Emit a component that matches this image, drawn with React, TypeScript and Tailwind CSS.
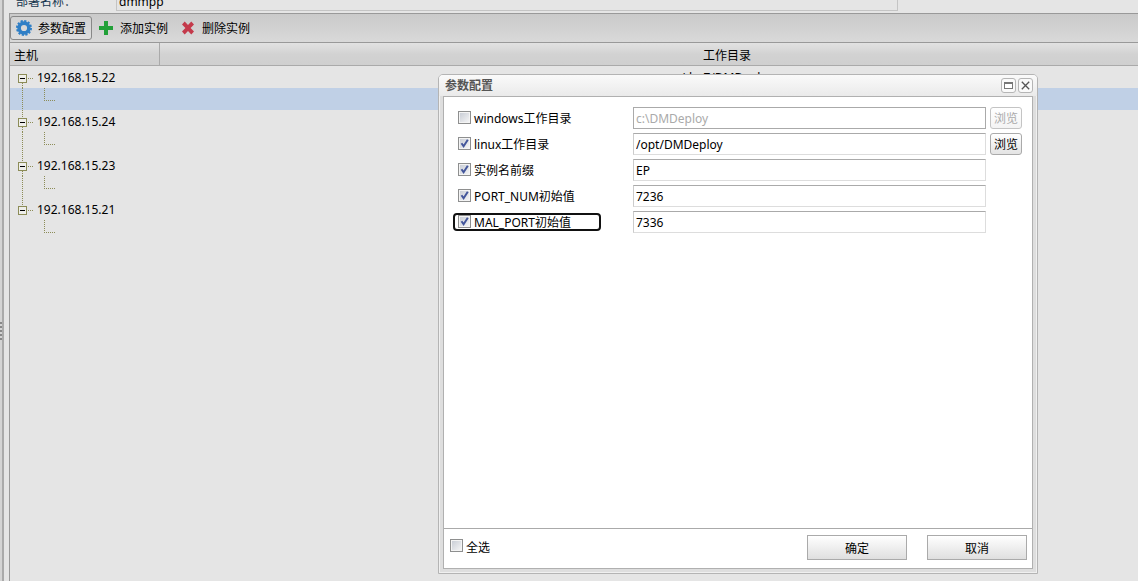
import clsx from 'clsx';
import { useState } from 'react';

interface Field {
	id: string;
	label: string;
	value: string;
	enabled: boolean;
	browse?: boolean;
	highlighted?: boolean;
}

const HOSTS = ['192.168.15.22', '192.168.15.24', '192.168.15.23', '192.168.15.21'];

const FIELDS: Field[] = [
	{ id: 'windows', label: 'windows工作目录', value: 'c:\\DMDeploy', enabled: false, browse: true },
	{ id: 'linux', label: 'linux工作目录', value: '/opt/DMDeploy', enabled: true, browse: true },
	{ id: 'prefix', label: '实例名前缀', value: 'EP', enabled: true },
	{ id: 'port', label: 'PORT_NUM初始值', value: '7236', enabled: true },
	{ id: 'mal', label: 'MAL_PORT初始值', value: '7336', enabled: true, highlighted: true }
];

const GearIcon = () => (
	<svg width="16" height="16" viewBox="0 0 16 16" aria-hidden="true">
		<circle cx="8" cy="8" r="7" fill="none" stroke="#2f7fc6" strokeWidth="2" strokeDasharray="2.2 1.465" />
		<circle cx="8" cy="8" r="4.9" fill="none" stroke="#2f7fc6" strokeWidth="3.6" />
	</svg>
);

const PlusIcon = () => (
	<svg width="16" height="16" viewBox="0 0 16 16" aria-hidden="true">
		<path d="M6 1h4v5h5v4h-5v5H6v-5H1V6h5z" fill="#22a038" />
	</svg>
);

const CrossIcon = () => (
	<svg width="16" height="16" viewBox="0 0 16 16" aria-hidden="true">
		<path
			d="M2 4.5 4.7 1.6 8 4.9l3.3-3.3L14 4.5 10.6 8l3.4 3.5-2.7 2.9L8 11.1l-3.3 3.3L2 11.5 5.4 8z"
			fill="#c43a4b"
		/>
	</svg>
);

const CheckBox = ({ id, checked, onChange }: { id: string; checked: boolean; onChange: (v: boolean) => void }) => (
	<span className="relative block size-[13px] shrink-0 self-start">
		<input
			id={id}
			type="checkbox"
			checked={checked}
			onChange={(event) => onChange(event.target.checked)}
			className="block size-[13px] appearance-none border border-[#8e8f8f] bg-linear-to-br from-[#c5cad3] to-[#f8f8f8] shadow-[inset_0_0_0_1px_#f4f4f4]"
		/>
		{checked && (
			<svg className="pointer-events-none absolute inset-0" width="13" height="13" viewBox="0 0 13 13">
				<path d="M3.5 6.2 5.6 9.2 9.8 2.8" fill="none" stroke="#43569b" strokeWidth="2" />
			</svg>
		)}
	</span>
);

const HostNode = ({ host, last }: { host: string; last: boolean }) => (
	<div className="flex h-[22px] items-center">
		<svg width="27" height="22" viewBox="0 0 27 22" aria-hidden="true" shapeRendering="crispEdges">
			{!last && <path d="M12.5 17v5" stroke="#8c8c57" strokeDasharray="1 1" />}
			{host !== HOSTS[0] && <path d="M12.5 0v8" stroke="#8c8c57" strokeDasharray="1 1" />}
			<path d="M8.5 8.5h8v8h-8z" fill="#eeeeea" stroke="#8c8c57" />
			<path d="M10 12.5h5" stroke="#000" />
			<path d="M18 12.5h6" stroke="#8c8c57" strokeDasharray="1 1" />
		</svg>
		<span className="pt-0.5">{host}</span>
	</div>
);

const InstanceNode = ({ last }: { last: boolean }) => (
	<svg className="block" width="60" height="22" viewBox="0 0 60 22" aria-hidden="true" shapeRendering="crispEdges">
		{!last && <path d="M12.5 0v22" stroke="#8c8c57" strokeDasharray="1 1" />}
		<path d="M34.5 0v12M34 12.5h12" fill="none" stroke="#8c8c57" strokeDasharray="1 1" />
	</svg>
);

const HostTable = () => (
	<table className="w-[1284px] table-fixed border-separate border-spacing-0">
		<colgroup>
			<col className="w-[150px]" />
			<col />
		</colgroup>
		<thead>
			<tr className="h-[23px] bg-linear-to-b from-[#e2e2e2] via-[#d2d2d2] to-[#cfcfcf]">
				<th className="border-r border-b border-[#aaa] px-1 pt-1 pb-0 text-left font-normal">主机</th>
				<th className="border-b border-[#aaa] p-0 pt-1 font-normal">工作目录</th>
			</tr>
		</thead>
		{HOSTS.map((host, index) => {
			const last = index === HOSTS.length - 1;
			return (
				<tbody key={host}>
					<tr>
						<td className="p-0">
							<HostNode host={host} last={last} />
						</td>
						<td className="p-0 pt-0.5 text-center">{index === 0 && '/dm7/DMDeploy'}</td>
					</tr>
					<tr className={clsx(index === 0 && 'bg-[#c0d0e6]')}>
						<td className="p-0">
							<InstanceNode last={last} />
						</td>
						<td className="p-0" />
					</tr>
				</tbody>
			);
		})}
	</table>
);

const ToolButton = ({ icon, title, active }: { icon: React.ReactNode; title: string; active?: boolean }) => (
	<button
		type="button"
		className={clsx(
			'flex h-6 items-center gap-1.5 rounded-[3px] border px-[5px]',
			active ? 'border-[#888] bg-linear-to-b from-[#d2d2d2] to-[#dedede]' : 'border-transparent'
		)}
	>
		{icon}
		<span className="pt-0.5">{title}</span>
	</button>
);

const FieldRow = ({ field }: { field: Field }) => {
	const [enabled, setEnabled] = useState(field.enabled);
	const [value, setValue] = useState(field.value);

	return (
		<div className="flex h-[22px] items-center">
			<div
				className={clsx(
					'flex h-[18px] w-[148px] shrink-0 items-center gap-[3px] rounded-[4px] border-2 pl-[3px]',
					field.highlighted ? 'border-[#111]' : 'border-transparent'
				)}
			>
				<CheckBox id={field.id} checked={enabled} onChange={setEnabled} />
				<label htmlFor={field.id} className="pt-0.5 leading-4">
					{field.label}
				</label>
			</div>
			<input
				type="text"
				aria-label={field.label}
				value={value}
				disabled={!enabled}
				onChange={(event) => setValue(event.target.value)}
				className={clsx(
					'ml-8 h-[22px] min-w-0 flex-1 border bg-white px-[2px] disabled:text-[#aaa]',
					enabled ? 'border-[#ddd] border-t-[#aaa] border-l-[#ccc]' : 'border-[#aaa]'
				)}
			/>
			<div className="ml-1 w-8 shrink-0">
				{field.browse && (
					<button
						type="button"
						disabled={!enabled}
						className="h-[22px] w-full rounded-[3px] border border-[#aaa] bg-linear-to-b from-white to-[#e4e4e4] pt-0.5 disabled:border-[#c4c4c4] disabled:to-[#f4f4f4] disabled:text-[#aaa]"
					>
						浏览
					</button>
				)}
			</div>
		</div>
	);
};

const WINDOW_BUTTON = 'flex size-[15px] items-center justify-center rounded-[3px] border border-[#b5b5b5] bg-[#fafafa]';
const ACTION_BUTTON = 'h-[25px] w-[100px] border border-[#aaa] bg-linear-to-b from-white to-[#dfdfdf] pt-0.5';

const ConfigDialog = () => {
	const [all, setAll] = useState(false);

	return (
		<div
			role="dialog"
			aria-labelledby="dialog-title"
			className="absolute top-[74px] left-[438px] flex h-[500px] w-[600px] flex-col rounded-t-[5px] border border-[#b4b4b4] bg-[#dedede] px-1 pb-1 shadow-[inset_0_0_0_1px_#f0f0f0]"
		>
			<div className="-mx-1 flex h-[21px] shrink-0 items-center rounded-t-[4px] bg-linear-to-b from-[#fafafa] to-[#eaeaea] pr-1 pl-1.5">
				<h2 id="dialog-title" className="flex-1 font-bold text-[#555]">
					参数配置
				</h2>
				<div className="flex gap-0.5">
					<button type="button" aria-label="最大化" className={WINDOW_BUTTON}>
						<svg width="9" height="7" viewBox="0 0 9 7" shapeRendering="crispEdges">
							<path d="M.5.5h8v6h-8zM0 1.5h9" fill="#fff" stroke="#777" />
						</svg>
					</button>
					<button type="button" aria-label="关闭" className={WINDOW_BUTTON}>
						<svg width="9" height="9" viewBox="0 0 9 9">
							<path d="m.8.8 7.4 7.4M8.2.8.8 8.2" stroke="#555" strokeWidth="1.3" />
						</svg>
					</button>
				</div>
			</div>
			<div className="flex flex-1 flex-col border border-[#b0b0b0] bg-white">
				<div className="flex flex-1 flex-col gap-1 pt-2.5 pr-2.5 pl-[9px]">
					{FIELDS.map((field) => (
						<FieldRow key={field.id} field={field} />
					))}
				</div>
				<div className="flex h-10 items-start border-t border-[#aaa] pt-1.5 pr-[5px] pl-1.5">
					<div className="flex flex-1 gap-[3px] pt-1">
						<CheckBox id="all" checked={all} onChange={setAll} />
						<label htmlFor="all">全选</label>
					</div>
					<div className="flex gap-5">
						<button type="button" className={ACTION_BUTTON}>
							确定
						</button>
						<button type="button" className={ACTION_BUTTON}>
							取消
						</button>
					</div>
				</div>
			</div>
		</div>
	);
};

const App = () => (
	<div className="relative flex min-h-screen overflow-hidden bg-[#e5e5e5] font-['Noto_Sans','Noto_Sans_CJK_SC',sans-serif] text-[12px] leading-[18px] text-black">
		<div className="flex w-1 shrink-0 items-center border-r-2 border-[#aaa] bg-[#d4d4d4] pt-20">
			<div className="flex flex-col gap-0.5">
				{[0, 1, 2, 3, 4].map((grip) => (
					<div key={grip} className="h-0.5 w-0.5 bg-[#888]" />
				))}
			</div>
		</div>
		<div className="flex min-w-0 flex-1 flex-col pl-[5px]">
			<div className="flex h-[13px] items-end overflow-hidden">
				<label htmlFor="deploy-name" className="mb-0.5 w-[107px] shrink-0 pl-[7px] text-[#15364f]">
					部署名称：
				</label>
				<input
					id="deploy-name"
					defaultValue="dmmpp"
					className="mb-0.5 h-5 w-[782px] border border-[#c4c4c4] bg-transparent px-[2px]"
				/>
			</div>
			<main className="flex-1 overflow-hidden border-t border-l border-[#999]">
				<div className="flex h-[29px] items-center border-b border-[#999] bg-linear-to-b from-[#cacaca] to-[#d9d9d9]">
					<ToolButton icon={<GearIcon />} title="参数配置" active />
					<ToolButton icon={<PlusIcon />} title="添加实例" />
					<ToolButton icon={<CrossIcon />} title="删除实例" />
				</div>
				<HostTable />
			</main>
		</div>
		<ConfigDialog />
	</div>
);

export default App;
